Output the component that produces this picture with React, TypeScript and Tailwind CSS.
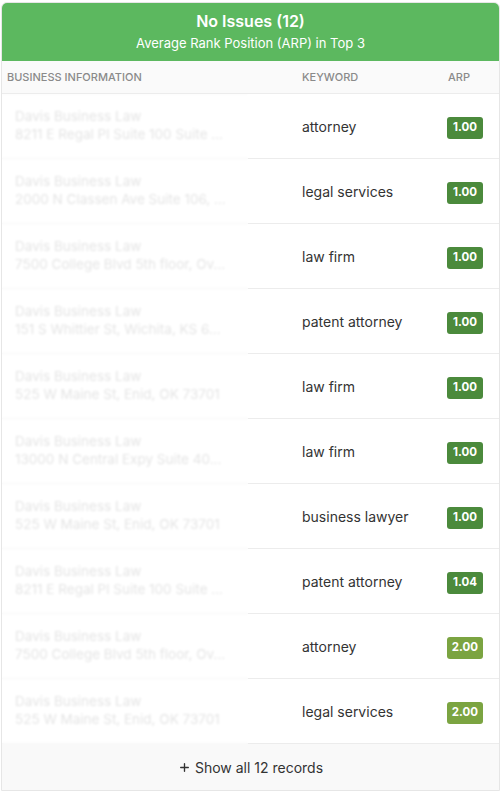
import { Plus } from 'lucide-react'

interface Row {
  name: string
  address: string
  keyword: string
  arp: string
}

const rows: Row[] = [
  { name: 'Davis Business Law', address: '8211 E Regal Pl Suite 100 Suite ...', keyword: 'attorney', arp: '1.00' },
  { name: 'Davis Business Law', address: '2000 N Classen Ave Suite 106, ...', keyword: 'legal services', arp: '1.00' },
  { name: 'Davis Business Law', address: '7500 College Blvd 5th floor, Ov...', keyword: 'law firm', arp: '1.00' },
  { name: 'Davis Business Law', address: '151 S Whittier St, Wichita, KS 6...', keyword: 'patent attorney', arp: '1.00' },
  { name: 'Davis Business Law', address: '525 W Maine St, Enid, OK 73701', keyword: 'law firm', arp: '1.00' },
  { name: 'Davis Business Law', address: '13000 N Central Expy Suite 40...', keyword: 'law firm', arp: '1.00' },
  { name: 'Davis Business Law', address: '525 W Maine St, Enid, OK 73701', keyword: 'business lawyer', arp: '1.00' },
  { name: 'Davis Business Law', address: '8211 E Regal Pl Suite 100 Suite ...', keyword: 'patent attorney', arp: '1.04' },
  { name: 'Davis Business Law', address: '7500 College Blvd 5th floor, Ov...', keyword: 'attorney', arp: '2.00' },
  { name: 'Davis Business Law', address: '525 W Maine St, Enid, OK 73701', keyword: 'legal services', arp: '2.00' },
]

export default function App() {
  return (
    <div className="min-h-screen bg-white px-px pt-[2px]" style={{ fontFamily: 'Inter, "Noto Sans", sans-serif' }}>
      <div className="border border-[#e6e6e6] rounded-t-md overflow-hidden bg-white">
        <header className="bg-[#5cb85f] text-white text-center h-[58px] flex flex-col items-center justify-center">
          <h1 className="text-[16px] font-semibold leading-5">No Issues (12)</h1>
          <p className="text-[13px] leading-5 mt-[2px]">Average Rank Position (ARP) in Top 3</p>
        </header>

        <div className="grid grid-cols-[292px_146px_1fr] h-[33px] items-center bg-[#fafafa] border-b border-[#ececec] text-[11px] font-medium uppercase text-[#8a8a8a]">
          <div className="pl-[5px]">Business Information</div>
          <div className="pl-2">Keyword</div>
          <div className="pl-2">ARP</div>
        </div>

        <div className="relative">
          {rows.map((r, i) => (
            <div key={i} className="grid grid-cols-[292px_146px_1fr] h-[65px] items-center border-b border-[#ececec]">
              <div className="pl-[13px] pb-[3px] text-[13.5px] leading-[18px] text-[#c4c4c4] whitespace-nowrap blur-[0.6px]">
                <div>{r.name}</div>
                <div>{r.address}</div>
              </div>
              <div className="pl-2 text-[14px] text-[#333]">{r.keyword}</div>
              <div className="pl-[7px]">
                <span
                  className={
                    'inline-flex items-center justify-center w-[36px] h-[22px] rounded-[3px] text-white text-[11.5px] font-bold ' +
                    (r.arp === '2.00' ? 'bg-[#7ba441]' : 'bg-[#4b8a3c]')
                  }
                >
                  {r.arp}
                </span>
              </div>
            </div>
          ))}
          <div className="absolute left-0 top-0 bottom-0 w-[246px] bg-white/55 backdrop-blur-[1px]" />
        </div>

        <button className="w-full h-[46px] bg-[#f9f9f9] flex items-center justify-center gap-1 text-[14px] text-[#333]">
          <Plus className="w-[13px] h-[13px]" strokeWidth={2.5} />
          Show all 12 records
        </button>
      </div>
    </div>
  )
}
